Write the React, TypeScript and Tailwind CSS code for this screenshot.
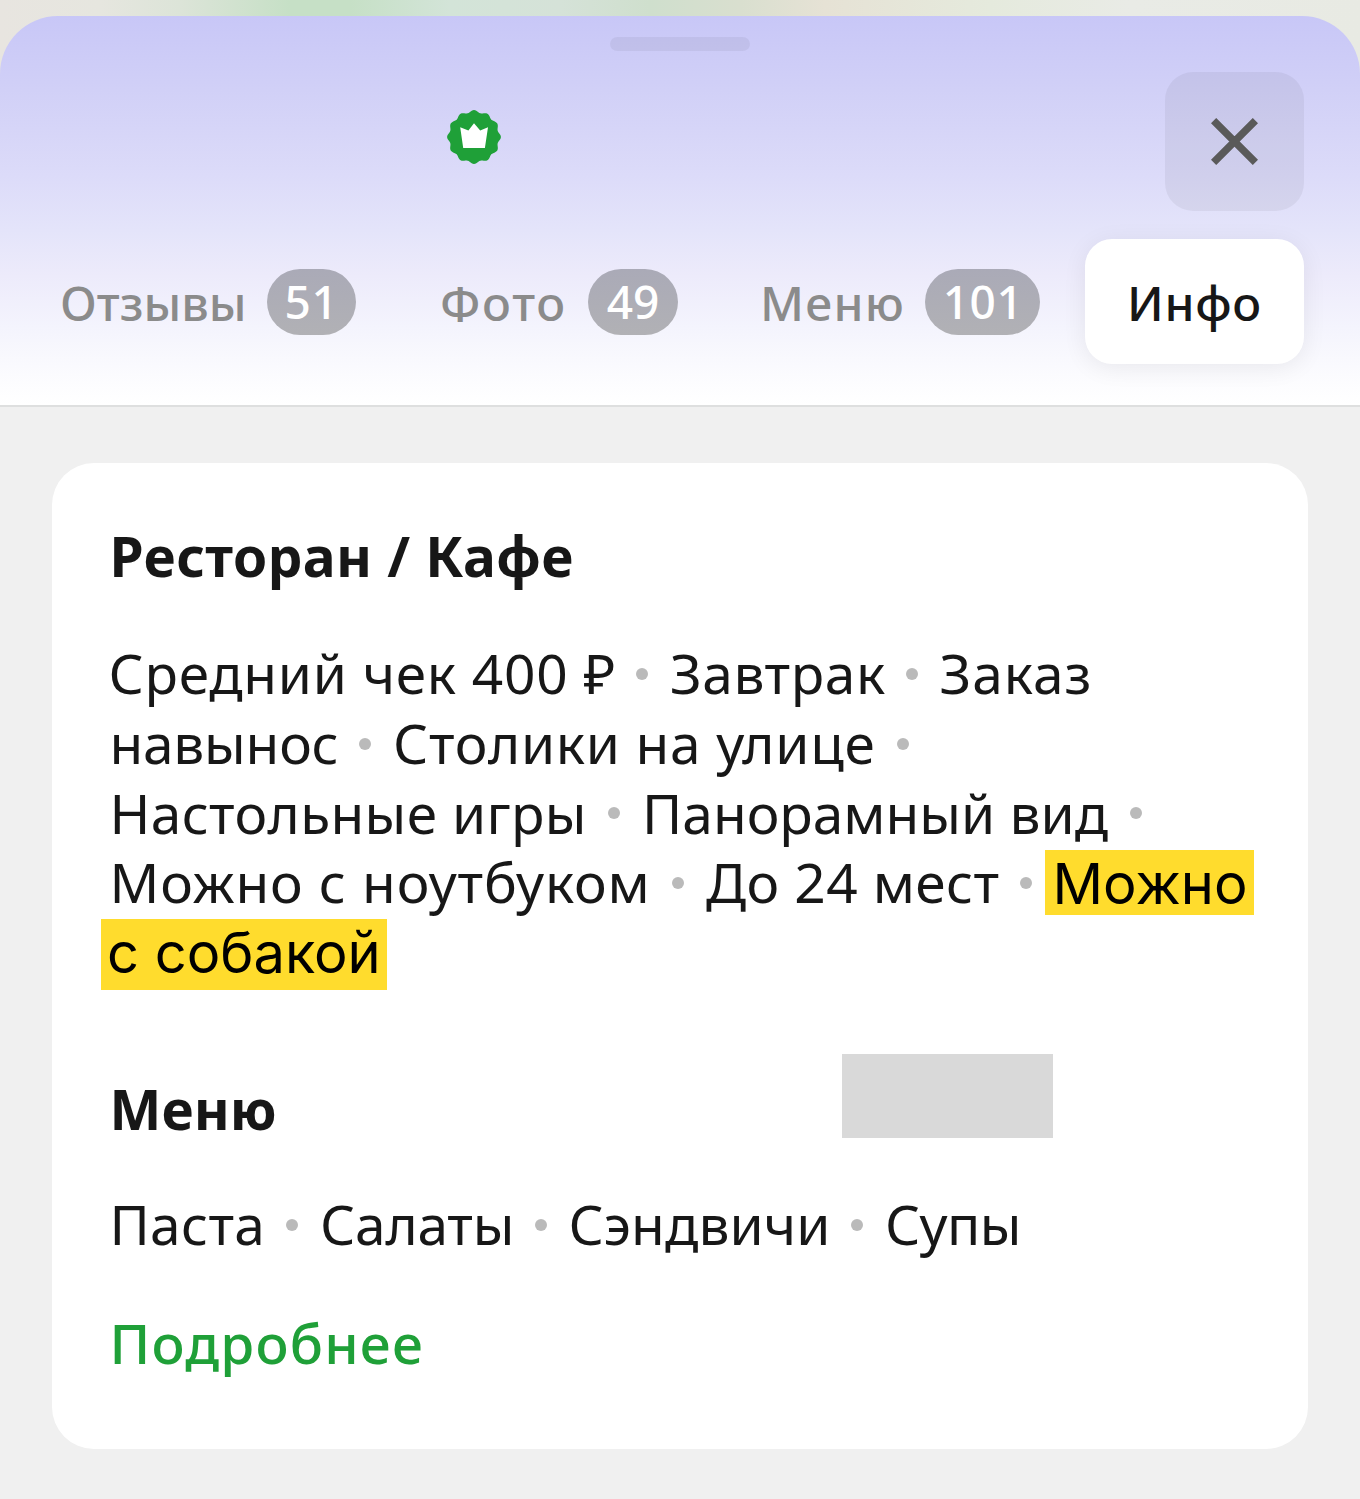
import { useState } from "react";

const tabs = [
  { title: "Отзывы", count: 51, titleClass: "w-[207px]", badgeClass: "w-[89px] mr-[84px] tracking-[0.6px]" },
  { title: "Фото", count: 49, titleClass: "w-[148px] tracking-[1.7px]", badgeClass: "w-[90px] mr-[81px]" },
  { title: "Меню", count: 101, titleClass: "w-[166px] pl-px tracking-[1.2px]", badgeClass: "w-[115px] tracking-[0.6px] pl-px" },
];

const features = [
  [
    { text: "Средний чек 400 ₽", className: "w-[529px] tracking-[0.75px] -ml-px" },
    { text: "Завтрак", className: "w-[237px] tracking-[0.6px]" },
    { text: "Заказ", className: "tracking-[1px]" },
  ],
  [
    { text: "навынос", className: "w-[251px] -tracking-[0.25px]" },
    { text: "Столики на улице", className: "w-[505px] tracking-[0.7px]" },
  ],
  [
    { text: "Настольные игры", className: "w-[500px] tracking-[0.35px]" },
    { text: "Панорамный вид", className: "w-[489px] tracking-[0px]" },
  ],
  [
    { text: "Можно с ноутбуком", className: "w-[564px] tracking-[0.9px]" },
    { text: "До 24 мест", className: "w-[315px] tracking-[0.4px]" },
  ],
];

const menu = [
  { text: "Паста", className: "w-[178px] tracking-[0.3px]" },
  { text: "Салаты", className: "w-[216px] -tracking-[0.2px]" },
  { text: "Сэндвичи", className: "w-[284px] tracking-[0.1px]" },
  { text: "Супы", className: "-tracking-[0.6px]" },
];

// wavy circle with 12 bumps
const badgePath = () => {
  const points: string[] = [];
  for (let i = 0; i < 144; i++) {
    const angle = (i / 144) * Math.PI * 2;
    const r = 25.7 + 1.2 * Math.cos(angle * 12);
    points.push(`${(27 + r * Math.sin(angle)).toFixed(2)} ${(27 - r * Math.cos(angle)).toFixed(2)}`);
  }
  return `M${points.join("L")}Z`;
};

const CrownBadge = () => (
  <svg viewBox="0 0 54 54" className="w-[54px] h-[54px]">
    <path d={badgePath()} fill="#1fa038" />
    <path
      d="M13.2 17.2 L21.4 20.6 L27 13.3 L33.2 20.6 L41 17.2 L37.9 38 L16.2 38 Z"
      fill="#fff"
    />
  </svg>
);

const Dot = () => (
  <i className="size-3 shrink-0 rounded-full bg-[#bababa] mr-[20.5px] mt-[1px]" />
);

const App = () => {
  const [opened, setOpened] = useState(true);

  return (
    <div className="w-[1360px] h-[1499px] overflow-hidden bg-[linear-gradient(90deg,#e8e5e0_0px,#e6e6df_100px,#dce4d8_180px,#c6e0c6_290px,#c6e0c6_350px,#d3e4d8_450px,#d5e2d8_560px,#cfdfcd_650px,#d9dfcf_740px,#e6e2d5_825px,#e5eadd_990px,#e9ebe6_1130px,#e8eae3_1360px)] pt-4 font-['Noto_Sans',sans-serif] text-[#171717]">
      {opened && (
        <>
          <header className="h-[391px] rounded-t-[58px] border-b-2 border-[#dedfdf] bg-[linear-gradient(180deg,#c8c7f7_0%,#d1d0f7_19%,#dcdbf9_41%,#e4e4fa_55%,#edebfb_67%,#f4f4fd_80%,#fafafe_90%,#ffffff_100%)] pt-[21px]">
            <div className="mx-auto w-[140px] h-[14px] rounded-[7px] bg-black/5" />
            <div className="flex items-start justify-between mt-[21px] pl-[447px] pr-14">
              <div className="pt-[38px]">
                <CrownBadge />
              </div>
              <button
                onClick={() => setOpened(false)}
                className="flex items-center justify-center size-[139px] rounded-[28px] bg-black/5"
              >
                <svg viewBox="0.5 0.5 47 47" className="size-[47px]" stroke="#5a5a5a" strokeWidth="7.4">
                  <path d="M3.1 3.1 L44.9 44.9 M44.9 3.1 L3.1 44.9" />
                </svg>
              </button>
            </div>
            <nav className="flex items-center mt-7 pl-[60px] h-[125px] text-5xl font-medium whitespace-nowrap">
              {tabs.map((tab) => (
                <div key={tab.title} className="flex items-center text-[#8b8b8b]">
                  <span className={`pt-[2px] ${tab.titleClass}`}>{tab.title}</span>
                  <span
                    className={`flex justify-center h-[66px] rounded-[33px] bg-[linear-gradient(180deg,#aaaab7,#b1b1b5)] text-white text-[46px] leading-[64px] mt-px ${tab.badgeClass}`}
                  >
                    {tab.count}
                  </span>
                </div>
              ))}
              <div className="flex items-center ml-[45px] w-[219px] h-[125px] pl-[42px] pt-[2px] rounded-[27px] bg-white tracking-[0.7px] shadow-[0_4px_24px_rgba(0,0,0,0.07)]">
                Инфо
              </div>
            </nav>
          </header>

          <main className="h-[1092px] bg-[#f0f0f0] px-[52px] pt-14">
            <section className="h-[986px] w-[1256px] rounded-[42px] bg-white pl-14 pt-[58px] text-[55px] leading-[70px] whitespace-nowrap">
              <h2 className="pl-[1.5px] font-[680] tracking-[0.4px]">Ресторан / Кафе</h2>
              <div className="mt-[46px]">
                {features.map((row, i) => (
                  <div key={i} className="flex items-center h-[69.7px]">
                    {row.map((item, j) => (
                      <div key={item.text} className="flex items-center pt-[3px]">
                        <span className={`shrink-0 pl-[1.5px] ${item.className}`}>{item.text}</span>
                        {(i > 0 || j < 2) && <Dot />}
                      </div>
                    ))}
                    {i === 3 && (
                      <mark className="-ml-[7.5px] w-[209px] h-[65px] pl-2 mt-[3px] bg-[#ffdc2d] text-black font-['Inter'] text-[56px] leading-[68px]">
                        Можно
                      </mark>
                    )}
                  </div>
                ))}
                <mark className="block -ml-[7px] mt-[3px] w-[286px] h-[71px] pl-1.5 bg-[#ffdc2d] text-black font-['Inter'] text-[56px] leading-[69px]">
                  с собакой
                </mark>
              </div>

              <div className="flex h-[84px] mt-16">
                <h2 className="w-[734px] pl-[1.5px] pt-5 font-[680] tracking-[0.1px]">Меню</h2>
                <div className="w-[211px] bg-[#d9d9d9]" />
              </div>
              <div className="flex items-center h-[70px] mt-[50px]">
                {menu.map((item, i) => (
                  <div key={item.text} className="flex items-center pt-[3px]">
                    <span className={`shrink-0 pl-[1.5px] ${item.className}`}>{item.text}</span>
                    {i < menu.length - 1 && <Dot />}
                  </div>
                ))}
              </div>
              <button className="block mt-[50px] pl-[1.5px] font-medium text-[#1fa038] tracking-[1.2px]">
                Подробнее
              </button>
            </section>
          </main>
        </>
      )}
    </div>
  );
};

export default App;
